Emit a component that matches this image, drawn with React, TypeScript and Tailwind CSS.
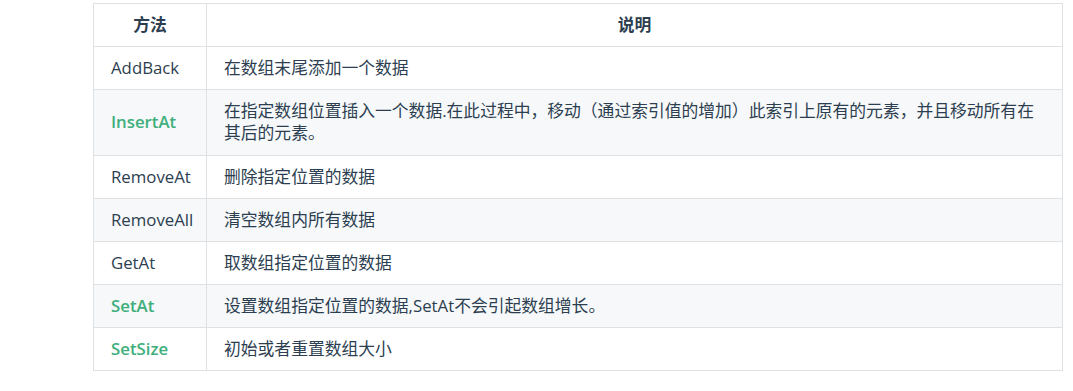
const rows: { name: string; desc: string; strong?: boolean }[] = [
  { name: "AddBack", desc: "在数组末尾添加一个数据" },
  {
    name: "InsertAt",
    desc: "在指定数组位置插入一个数据.在此过程中，移动（通过索引值的增加）此索引上原有的元素，并且移动所有在其后的元素。",
    strong: true,
  },
  { name: "RemoveAt", desc: "删除指定位置的数据" },
  { name: "RemoveAll", desc: "清空数组内所有数据" },
  { name: "GetAt", desc: "取数组指定位置的数据" },
  { name: "SetAt", desc: "设置数组指定位置的数据,SetAt不会引起数组增长。", strong: true },
  { name: "SetSize", desc: "初始或者重置数组大小", strong: true },
];

export default function App() {
  return (
    <div className="min-h-[391px] bg-white pt-[3px] pl-[93px] font-['Open_Sans','Noto_Sans_CJK_SC',sans-serif] text-[16.8px] leading-[22.15px] text-[#2c3e50]">
      <table className="w-[970px] table-fixed border-collapse">
        <colgroup>
          <col className="w-[113px]" />
          <col />
        </colgroup>
        <thead>
          <tr>
            <th className="border border-[#dfe2e5] px-[17px] py-[10px] text-center font-bold">方法</th>
            <th className="border border-[#dfe2e5] px-[17px] py-[10px] text-center font-bold">说明</th>
          </tr>
        </thead>
        <tbody>
          {rows.map((r, i) => (
            <tr key={r.name} className={i % 2 === 1 ? "bg-[#f6f8fa]" : "bg-white"}>
              <td className="border border-[#dfe2e5] px-[17px] py-[10px]">
                {r.strong ? <strong className="font-semibold text-[#3eaf7c]">{r.name}</strong> : r.name}
              </td>
              <td className="border border-[#dfe2e5] px-[17px] py-[10px]">{r.desc}</td>
            </tr>
          ))}
        </tbody>
      </table>
    </div>
  );
}
